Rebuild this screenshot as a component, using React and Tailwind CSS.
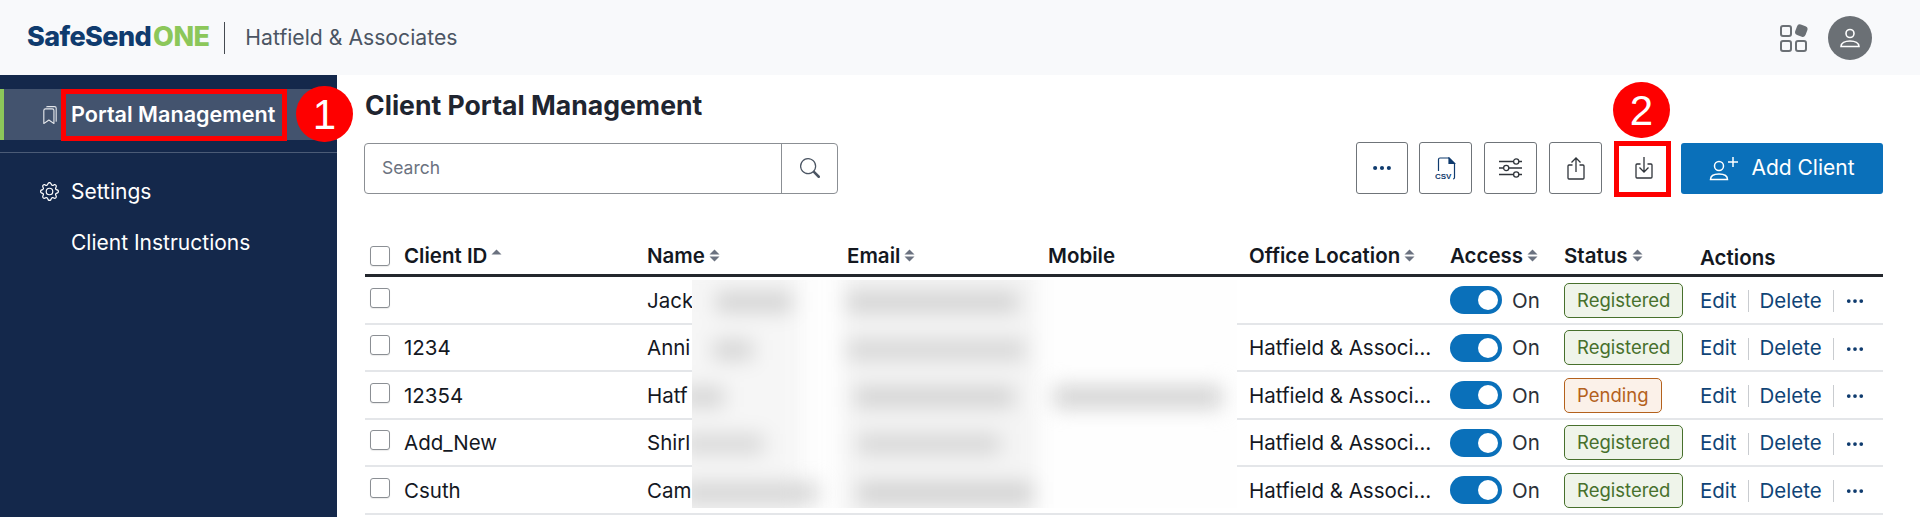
import React from "react";
import { BsBookmarks, BsGear, BsSearch, BsThreeDots } from "react-icons/bs";

const font = { fontFamily: "Inter, 'Noto Sans', sans-serif" };
const cols = "grid grid-cols-[282px_200px_201px_201px_201px_114px_136px_1fr]";

function Sort({ up }) {
  return (
    <svg width="11" height="13" viewBox="0 0 11 13" fill="#6b7280" className="ml-[4px]">
      <path d="M5.500 0.500L10.500 5.500H0.500z" />
      {!up && <path d="M0.500 7.500H10.500L5.500 12.500z" />}
    </svg>
  );
}

function Box() {
  return <span className="block w-[20px] h-[20px] rounded-[3px] border border-[#8b8f94] bg-white shrink-0 shadow-[0_1px_1px_rgba(0,0,0,0.08)]" />;
}

function Head({ children, sort, up, className = "" }) {
  return (
    <div className={"flex items-center text-[20.5px] font-semibold text-[#14181f] whitespace-nowrap " + className}>
      <span>{children}</span>
      {sort && <Sort up={up} />}
    </div>
  );
}

function Row({ id, name, office, status }) {
  const pending = status === "Pending";
  return (
    <div className={cols + " h-[47.5px] items-center border-b-2 border-[#e4e6e9] pt-[3px] text-[20.5px] text-[#14181f]"}>
      <div className="flex items-center gap-[14px] pl-[5px]">
        <span className="-mt-[7px]"><Box /></span>
        <span>{id}</span>
      </div>
      <div>{name}</div>
      <div />
      <div />
      <div className="truncate pr-[14px]">{office}</div>
      <div className="flex items-center gap-[10px]">
        <span className="flex w-[52px] h-[28px] items-center justify-end rounded-full bg-[#0a70ba] pr-[4px] -mt-0.5">
          <span className="w-[20px] h-[20px] rounded-full bg-white" />
        </span>
        <span className="text-[#2b3038]">On</span>
      </div>
      <div>
        <span className={"inline-flex h-[35px] items-center justify-center rounded-[5px] border px-[12px] text-[18.5px] -mt-1 " + (pending ? "border-[#b4611c] bg-[#fbf1e9] text-[#b4611c]" : "border-[#47702c] bg-[#eff4ea] text-[#47702c]")}>
          {status}
        </span>
      </div>
      <div className="flex items-center text-[#0f4476]">
        <span>Edit</span>
        <span className="mx-[11px] h-[22px] w-px bg-[#c9ccd0]" />
        <span>Delete</span>
        <span className="mx-[11px] h-[22px] w-px bg-[#c9ccd0]" />
        <BsThreeDots className="w-[20px] h-[20px] text-[#0f3b6e]" />
      </div>
    </div>
  );
}

function ToolBtn({ children, className = "w-[52px]" }) {
  return (
    <button className={"flex h-[52px] items-center justify-center rounded-[3px] border border-[#6f7479] bg-white " + className}>
      {children}
    </button>
  );
}

function Badge({ children, className }) {
  return (
    <span className={"absolute flex items-center justify-center rounded-full bg-[#fe0000] text-white text-[42px] " + className} style={{ fontFamily: "'Liberation Sans', sans-serif" }}>
      {children}
    </span>
  );
}

const rows = [
  { id: "", name: "Jack", office: "", status: "Registered" },
  { id: "1234", name: "Anni", office: "Hatfield & Associates", status: "Registered" },
  { id: "12354", name: "Hatf", office: "Hatfield & Associates", status: "Pending" },
  { id: "Add_New", name: "Shirl", office: "Hatfield & Associates", status: "Registered" },
  { id: "Csuth", name: "Cam", office: "Hatfield & Associates", status: "Registered" },
];

export default function App() {
  return (
    <div className="relative h-[517px] w-[1920px] overflow-hidden bg-white" style={font}>
      <header className="flex h-[75px] items-center bg-[#f8f9fb] pl-[27px] pr-[48px]">
        <span className="text-[27px] font-extrabold tracking-[-0.6px] text-[#0f3b6e]">
          SafeSend<span className="ml-[2px] text-[#8cc75a]">ONE</span>
        </span>
        <span className="ml-[15px] h-[32px] w-px bg-[#454a50]" />
        <span className="ml-[20px] text-[21.2px] text-[#4b5563]">Hatfield &amp; Associates</span>
        <div className="ml-auto flex items-center gap-[20px]">
          <svg width="29" height="29" viewBox="0 0 29 29" fill="none" stroke="#6b7075" strokeWidth="2">
            <rect x="2" y="3" width="10" height="10" rx="2" />
            <rect x="2" y="18" width="10" height="10" rx="2" />
            <rect x="17" y="18" width="10" height="10" rx="2" />
            <rect x="18" y="3" width="9" height="9" rx="2" fill="#6b7075" transform="rotate(20 22 7)" />
          </svg>
          <span className="flex h-[44px] w-[44px] items-center justify-center rounded-full bg-[#6b7075]">
            <svg width="24" height="24" viewBox="0 0 24 24" fill="none" stroke="#fff" strokeWidth="1.6">
              <circle cx="12" cy="7.5" r="4" />
              <path d="M3 20.5c0-3.500 4-5.500 9-5.500s9 2 9 5.500z" />
            </svg>
          </span>
        </div>
      </header>

      <div className="flex h-[442px]">
        <aside className="w-[337px] shrink-0 bg-[#14284b] pt-[14px] text-white">
          <div className="relative flex h-[51px] items-center border-l-[4px] border-[#8cc75a] bg-[#43536e] pl-[37px]">
            <BsBookmarks className="h-[18px] w-[18px] text-[#e5e7eb]" />
            <span className="ml-[12px] text-[21.6px] font-semibold whitespace-nowrap">Portal Management</span>
          </div>
          <div className="mt-[12px] border-t border-[#4b5b76]" />
          <div className="mt-[23px] flex items-center pl-[40px] text-[21px]">
            <BsGear className="h-[19px] w-[19px]" />
            <span className="ml-[12px]">Settings</span>
          </div>
          <div className="mt-[19px] pl-[71px] text-[21px]">Client Instructions</div>
        </aside>

        <main className="flex-1 pl-[28px] pr-[37px]">
          <h1 className="pt-[14px] text-[26.6px] font-bold leading-[32px] text-[#1f2530]">Client Portal Management</h1>
          <div className="mt-[21px] flex items-center">
            <div className="-ml-px flex h-[51px] w-[474px] rounded-[4px] border border-[#8b8f94]">
              <span className="flex flex-1 items-center pl-[17px] pt-px text-[17.5px] text-[#6b7280]">Search</span>
              <span className="flex w-[56px] items-center justify-center border-l border-[#8b8f94]">
                <BsSearch className="h-[20px] w-[20px] text-[#4b5563]" />
              </span>
            </div>
            <div className="ml-auto flex items-center">
              <ToolBtn><BsThreeDots className="h-[22px] w-[22px] text-[#0f3b6e]" /></ToolBtn>
              <ToolBtn className="ml-[11px] w-[53px]">
                <svg width="22" height="23" viewBox="0 0 22 23" fill="none" stroke="#0f3b6e" strokeWidth="1.200">
                  <path d="M3.500 14V2.500a1.500 1.500 0 0 1 1.500-1.500H14l5.500 5.500V20.500a1.500 1.500 0 0 1-1.500 1.500" />
                  <path d="M14 1l5.500 5.500H14z" fill="#0f3b6e" />
                  <text x="0" y="21.500" fontSize="8" fontWeight="700" fill="#0f3b6e" stroke="none" fontFamily="Liberation Sans">CSV</text>
                </svg>
              </ToolBtn>
              <ToolBtn className="ml-[12px] w-[53px]">
                <svg width="23" height="20" viewBox="0 0 23 20" fill="none" stroke="#30353b" strokeWidth="1.300">
                  <path d="M0 3.500h14.500M20 3.500h3M0 10h4.500M10 10h13M0 16.500h14.500M20 16.500h3" />
                  <circle cx="17.200" cy="3.500" r="2.600" /><circle cx="7.200" cy="10" r="2.600" /><circle cx="17.200" cy="16.500" r="2.600" />
                </svg>
              </ToolBtn>
              <ToolBtn className="ml-[12px] w-[53px]">
                <svg width="18" height="23" viewBox="0 0 18 23" fill="none" stroke="#30353b" strokeWidth="1.300">
                  <path d="M5.500 8H2a1 1 0 0 0-1 1v12a1 1 0 0 0 1 1h14a1 1 0 0 0 1-1V9a1 1 0 0 0-1-1h-3.500" />
                  <path d="M9 15V1M4.500 5.500L9 1l4.500 4.500" />
                </svg>
              </ToolBtn>
              <button className="ml-[16px] flex h-[52px] w-[52px] items-center justify-center bg-white">
                <svg width="18" height="22" viewBox="0 0 18 22" fill="none" stroke="#30353b" strokeWidth="1.300">
                  <path d="M5.500 7H2a1 1 0 0 0-1 1v12a1 1 0 0 0 1 1h14a1 1 0 0 0 1-1V8a1 1 0 0 0-1-1h-3.500" />
                  <path d="M9 0v15M4.500 10.500L9 15l4.500-4.500" />
                </svg>
              </button>
              <button className="ml-[11px] flex h-[51px] w-[202px] items-center justify-center gap-[10px] rounded-[3px] bg-[#0a70ba] text-[21px] text-white">
                <svg width="32" height="26" viewBox="0 0 32 26" fill="none" stroke="#fff" strokeWidth="1.500">
                  <circle cx="10" cy="11" r="4.500" />
                  <path d="M1.500 24.500c0-3.500 3.500-5.500 8.500-5.500s8.500 2 8.500 5.500z" />
                  <path d="M24 2v10M19 7h10" />
                </svg>
                Add Client
              </button>
            </div>
          </div>

          <div className="mt-[44px]">
            <div className={cols + " h-[39px] items-center border-b-[3px] border-[#23272d] pb-[4px]"}>
              <div className="flex items-center gap-[14px] pl-[5px]">
                <Box />
                <Head sort up>Client ID</Head>
              </div>
              <Head sort>Name</Head>
              <Head sort>Email</Head>
              <Head>Mobile</Head>
              <Head sort>Office Location</Head>
              <Head sort>Access</Head>
              <Head sort>Status</Head>
              <Head className="mt-[5px]">Actions</Head>
            </div>
            {rows.map((r, i) => <Row key={i} {...r} />)}
          </div>
        </main>
      </div>

      {/* redaction blur painted over the names, emails and numbers */}
      <div className="absolute left-[692px] top-[280px] h-[228px] w-[545px] overflow-hidden bg-[#fefefe]">
        <div className="absolute inset-0 blur-[10px]">
          <span className="absolute left-[-20px] top-[-20px] h-[270px] w-[130px] bg-[#f6f6f6]" />
          <span className="absolute left-[150px] top-[-20px] h-[270px] w-[195px] bg-[#f4f4f4]" />
          <span className="absolute left-[24px] top-[12px] h-[20px] w-[76px] bg-[#d2d2d2]" />
          <span className="absolute left-[155px] top-[12px] h-[20px] w-[171px] bg-[#d2d2d2]" />
          <span className="absolute left-[21px] top-[60px] h-[20px] w-[40px] bg-[#d4d4d4]" />
          <span className="absolute left-[155px] top-[60px] h-[20px] w-[178px] bg-[#d6d6d6]" />
          <span className="absolute left-[-10px] top-[107px] h-[20px] w-[42px] bg-[#d4d4d4]" />
          <span className="absolute left-[163px] top-[107px] h-[20px] w-[159px] bg-[#d2d2d2]" />
          <span className="absolute left-[362px] top-[106px] h-[22px] w-[168px] bg-[#d2d2d2]" />
          <span className="absolute left-[-10px] top-[154px] h-[20px] w-[82px] bg-[#d8d8d8]" />
          <span className="absolute left-[166px] top-[154px] h-[20px] w-[142px] bg-[#d6d6d6]" />
          <span className="absolute left-[-10px] top-[202px] h-[22px] w-[136px] bg-[#d6d6d6]" />
          <span className="absolute left-[166px] top-[202px] h-[22px] w-[175px] bg-[#d2d2d2]" />
        </div>
      </div>

      {/* callouts */}
      <span className="absolute left-[61px] top-[89px] h-[52px] w-[226px] border-[5px] border-[#fe0000]" />
      <span className="absolute left-[1614px] top-[141px] h-[56px] w-[57px] border-[5px] border-[#fe0000]" />
      <Badge className="left-[296px] top-[86px] h-[56px] w-[57px]">1</Badge>
      <Badge className="left-[1613px] top-[82px] h-[56px] w-[57px]">2</Badge>
    </div>
  );
}
